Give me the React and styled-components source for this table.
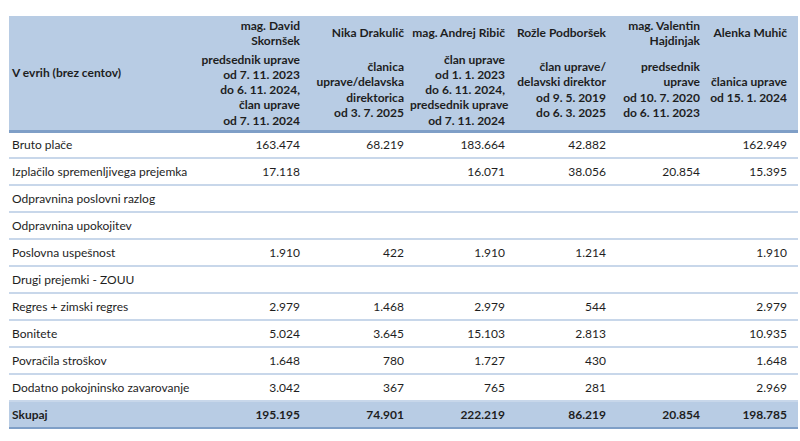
import styled, { createGlobalStyle } from "styled-components";

const GlobalStyle = createGlobalStyle`
  html, body {
    margin: 0;
    padding: 0;
    background: #fff;
  }
  body {
    font-family: Lato, "Liberation Sans", sans-serif;
    color: #1e1e1e;
  }
`;

const Page = styled.div`
  width: 800px;
  height: 441px;
  padding: 16px 2px 0 9px;
  box-sizing: border-box;
  overflow: hidden;
`;

const Table = styled.table`
  width: 789px;
  border-collapse: collapse;
  table-layout: fixed;
  font-size: 12px;
`;

const HeadCell = styled.th`
  background: #b8cce4;
  font-weight: 700;
  white-space: nowrap;
  text-align: ${({ $left }) => ($left ? "left" : "right")};
  vertical-align: middle;
  line-height: 15.3px;
  padding: ${({ $left }) => ($left ? "0 0 0 3px" : "0 6px 0 0")};
  height: ${({ $h }) => $h}px;
  box-sizing: border-box;
  border-bottom: ${({ $bottom }) => ($bottom ? "3px solid #7f9fc7" : "none")};
  &:last-child {
    padding-right: 11px;
  }
`;

const Row = styled.tr`
  height: 27px;
  border-bottom: 2px solid ${({ $total }) => ($total ? "#7f9fc7" : "#c8d7ea")};
  background: ${({ $total }) => ($total ? "#b8cce4" : "#fff")};
  font-weight: ${({ $total }) => ($total ? 700 : 400)};
`;

const Label = styled.td`
  padding: 0 0 0 3px;
  white-space: nowrap;
`;

const Num = styled.td`
  text-align: right;
  padding: 0 6px 0 0;
  &:last-child {
    padding-right: 11px;
  }
`;

const people = [
  {
    name: ["mag. David", "Skornšek"],
    role: [
      "predsednik uprave",
      "od 7. 11. 2023",
      "do 6. 11. 2024,",
      "član uprave",
      "od 7. 11. 2024",
    ],
  },
  {
    name: ["Nika Drakulič"],
    role: ["članica", "uprave/delavska", "direktorica", "od 3. 7. 2025"],
  },
  {
    name: ["mag. Andrej Ribič"],
    role: [
      "član uprave",
      "od 1. 1. 2023",
      "do 6. 11. 2024,",
      "predsednik uprave",
      "od 7. 11. 2024",
    ],
  },
  {
    name: ["Rožle Podboršek"],
    role: ["član uprave/", "delavski direktor", "od 9. 5. 2019", "do 6. 3. 2025"],
  },
  {
    name: ["mag. Valentin", "Hajdinjak"],
    role: ["predsednik", "uprave", "od 10. 7. 2020", "do 6. 11. 2023"],
  },
  {
    name: ["Alenka Muhič"],
    role: ["članica uprave", "od 15. 1. 2024"],
  },
];

const rows = [
  ["Bruto plače", "163.474", "68.219", "183.664", "42.882", "", "162.949"],
  ["Izplačilo spremenljivega prejemka", "17.118", "", "16.071", "38.056", "20.854", "15.395"],
  ["Odpravnina poslovni razlog", "", "", "", "", "", ""],
  ["Odpravnina upokojitev", "", "", "", "", "", ""],
  ["Poslovna uspešnost", "1.910", "422", "1.910", "1.214", "", "1.910"],
  ["Drugi prejemki - ZOUU", "", "", "", "", "", ""],
  ["Regres + zimski regres", "2.979", "1.468", "2.979", "544", "", "2.979"],
  ["Bonitete", "5.024", "3.645", "15.103", "2.813", "", "10.935"],
  ["Povračila stroškov", "1.648", "780", "1.727", "430", "", "1.648"],
  ["Dodatno pokojninsko zavarovanje", "3.042", "367", "765", "281", "", "2.969"],
];

const total = ["Skupaj", "195.195", "74.901", "222.219", "86.219", "20.854", "198.785"];

const widths = [185, 112, 104, 101, 101, 94, 92];

function Lines({ items }) {
  return items.map((t, i) => (
    <span key={i}>
      {t}
      {i < items.length - 1 && <br />}
    </span>
  ));
}

export default function App() {
  return (
    <Page>
      <GlobalStyle />
      <Table>
        <colgroup>
          {widths.map((w, i) => (
            <col key={i} style={{ width: w }} />
          ))}
        </colgroup>
        <thead>
          <tr>
            <HeadCell $left $bottom rowSpan={2}>
              V evrih (brez centov)
            </HeadCell>
            {people.map((p, i) => (
              <HeadCell key={i} $h={34}>
                <Lines items={p.name} />
              </HeadCell>
            ))}
          </tr>
          <tr>
            {people.map((p, i) => (
              <HeadCell key={i} $bottom $h={81}>
                <Lines items={p.role} />
              </HeadCell>
            ))}
          </tr>
        </thead>
        <tbody>
          {rows.map((r, i) => (
            <Row key={i}>
              <Label>{r[0]}</Label>
              {r.slice(1).map((v, j) => (
                <Num key={j}>{v}</Num>
              ))}
            </Row>
          ))}
          <Row $total>
            <Label>{total[0]}</Label>
            {total.slice(1).map((v, j) => (
              <Num key={j}>{v}</Num>
            ))}
          </Row>
        </tbody>
      </Table>
    </Page>
  );
}
